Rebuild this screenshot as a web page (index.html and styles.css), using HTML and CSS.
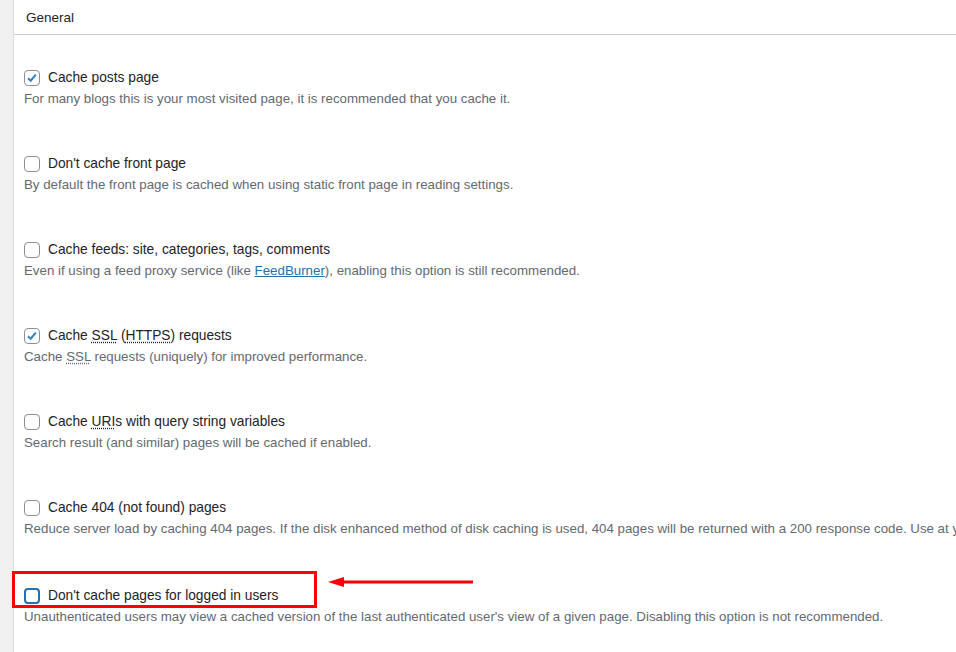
FILE: index.html
```html
<!DOCTYPE html>
<html lang="en">
<head>
<meta charset="utf-8">
<title>General</title>
<link rel="stylesheet" href="styles.css">
</head>
<body>
<div class="page">
  <aside class="rail"></aside>
  <main class="panel">
    <h3 class="panel-title">General</h3>
    <div class="options">
      <div class="option">
        <label class="opt-label"><span class="cb checked"><svg viewBox="0 0 16 16"><path d="M3.4 8.2 L6.5 11.2 L12.4 4.2" /></svg></span><span class="opt-text">Cache posts page</span></label>
        <p class="desc">For many blogs this is your most visited page, it is recommended that you cache it.</p>
      </div>
      <div class="option">
        <label class="opt-label"><span class="cb"></span><span class="opt-text">Don't cache front page</span></label>
        <p class="desc">By default the front page is cached when using static front page in reading settings.</p>
      </div>
      <div class="option">
        <label class="opt-label"><span class="cb"></span><span class="opt-text">Cache feeds: site, categories, tags, comments</span></label>
        <p class="desc">Even if using a feed proxy service (like <a href="#" class="link">FeedBurner</a>), enabling this option is still recommended.</p>
      </div>
      <div class="option">
        <label class="opt-label"><span class="cb checked"><svg viewBox="0 0 16 16"><path d="M3.4 8.2 L6.5 11.2 L12.4 4.2" /></svg></span><span class="opt-text">Cache <abbr>SSL</abbr> (<abbr>HTTPS</abbr>) requests</span></label>
        <p class="desc">Cache <abbr>SSL</abbr> requests (uniquely) for improved performance.</p>
      </div>
      <div class="option">
        <label class="opt-label"><span class="cb"></span><span class="opt-text">Cache <abbr>URI</abbr>s with query string variables</span></label>
        <p class="desc">Search result (and similar) pages will be cached if enabled.</p>
      </div>
      <div class="option">
        <label class="opt-label"><span class="cb"></span><span class="opt-text">Cache 404 (not found) pages</span></label>
        <p class="desc">Reduce server load by caching 404 pages. If the disk enhanced method of disk caching is used, 404 pages will be returned with a 200 response code. Use at your own risk.</p>
      </div>
      <div class="option option-last">
        <label class="opt-label"><span class="cb focus"></span><span class="opt-text">Don't cache pages for logged in users</span></label>
        <p class="desc">Unauthenticated users may view a cached version of the last authenticated user's view of a given page. Disabling this option is not recommended.</p>
      </div>
    </div>
  </main>
</div>
<svg class="annotation" width="956" height="652" viewBox="0 0 956 652">
  <rect x="13.5" y="572.5" width="302" height="34" fill="none" stroke="#f00" stroke-width="3"/>
  <line x1="473" y1="582" x2="340" y2="582" stroke="#f00" stroke-width="3"/>
  <polygon points="328,582 344,577 344,587" fill="#f00"/>
</svg>
</body>
</html>
```

FILE: styles.css
```css
html, body {
  margin: 0;
  padding: 0;
  background: #fff;
  overflow: hidden;
}
body {
  width: 956px;
  height: 652px;
  font-family: "Liberation Sans", Arial, sans-serif;
  color: #1d2327;
  position: relative;
}
.page {
  display: flex;
  height: 652px;
}
.rail {
  width: 13px;
  flex: none;
  background: #f0f0f1;
  border-right: 1px solid #dcdcde;
}
.panel {
  flex: 1;
  min-width: 0;
  overflow: hidden;
}
.panel-title {
  margin: 0;
  height: 35px;
  box-sizing: border-box;
  padding: 9px 0 0 12px;
  font-size: 13.5px;
  line-height: 17px;
  font-weight: normal;
  color: #1d2327;
  border-bottom: 1px solid #ccc;
}
.options {
  display: flex;
  flex-direction: column;
  gap: 45px;
  padding: 33px 0 0 10px;
}
.option {
  white-space: nowrap;
}
.option-last {
  margin-top: 2px;
}
.opt-label {
  display: flex;
  align-items: center;
  gap: 8px;
  font-size: 13.75px;
  line-height: 20px;
  height: 20px;
  color: #1d2327;
}
.cb {
  width: 16px;
  height: 16px;
  box-sizing: border-box;
  border: 1px solid #8c8f94;
  border-radius: 4px;
  background: #fff;
  flex: none;
  display: flex;
}
.cb svg {
  width: 14px;
  height: 14px;
}
.cb svg path {
  fill: none;
  stroke: #3582c4;
  stroke-width: 2.4;
}
.cb.focus {
  border: 2px solid #2271b1;
}
.desc {
  margin: 1px 0 0;
  font-size: 13.3px;
  line-height: 20px;
  color: #646970;
}
abbr {
  text-decoration: underline dotted;
  text-underline-offset: 2px;
}
.link {
  color: #2271b1;
  text-decoration: underline;
}
.annotation {
  position: absolute;
  left: 0;
  top: 0;
  pointer-events: none;
}
```
